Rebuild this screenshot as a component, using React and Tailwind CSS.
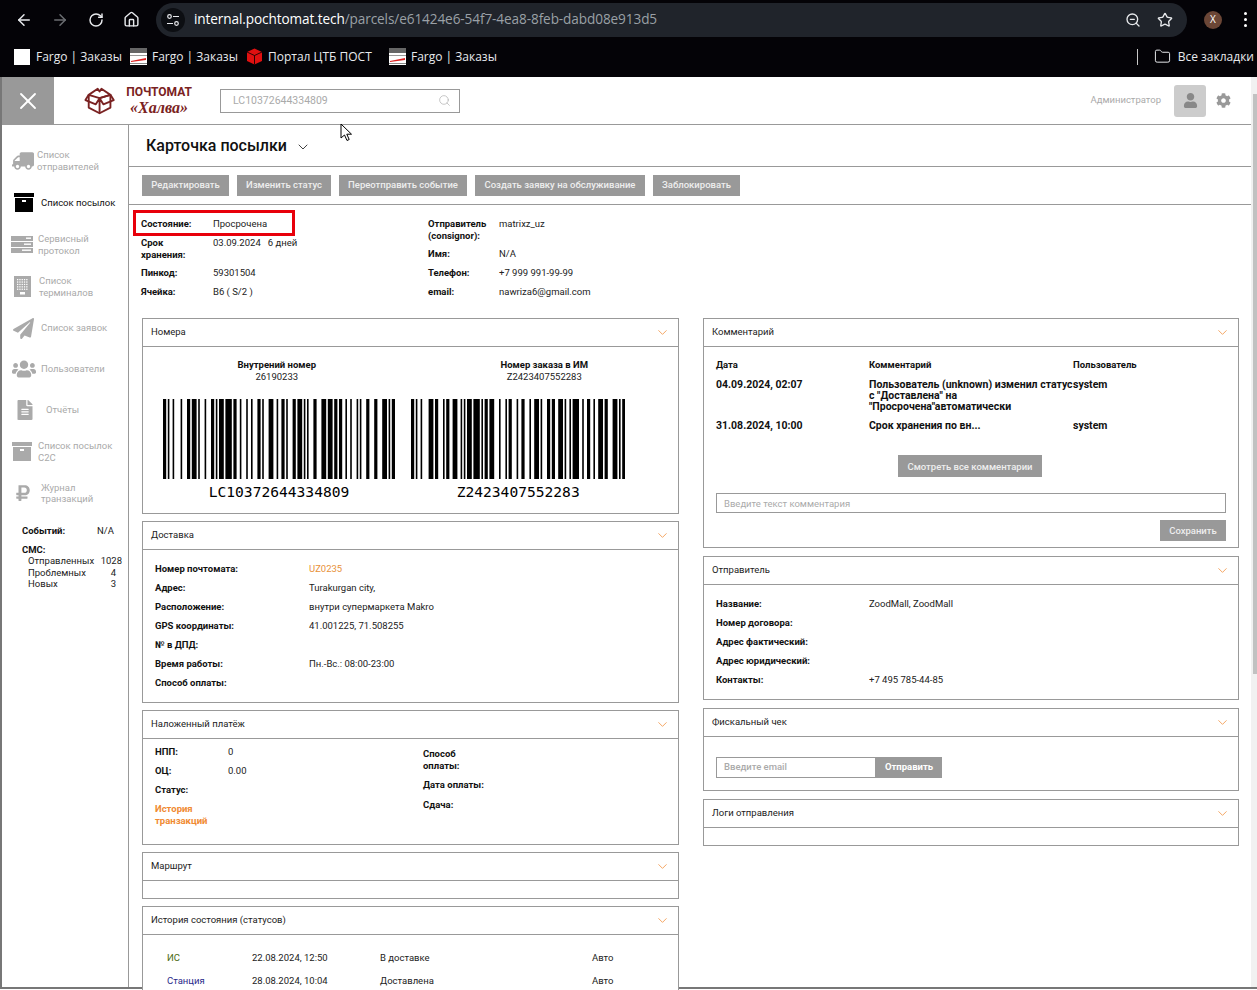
import { ArrowLeft, ArrowRight, RotateCw, Home, ZoomOut, Star, Folder, Search, ChevronDown, X } from 'lucide-react';
import { FaTruck, FaPaperPlane, FaUsers, FaFileAlt, FaRubleSign, FaCog, FaUser } from 'react-icons/fa';

const PATTERNS = ['212222','222122','222221','121223','121322','131222','122213','122312','132212','221213','221312','231212','112232','122132','122231','113222','123122','123221','223211','221132','221231','213212','223112','312131','311222','321122','321221','312212','322112','322211','212123','212321','232121','111323','131123','131321','112313','132113','132311','211313','231113','231311','112133','112331','132131','113123','113321','133121','313121','211331','231131','213113','213311','213131','311123','311321','331121','312113','312311','332111','314111','221411','431111','111224','111422','121124','121421','141122','141221','112214','112412','122114','122411','142112','142211','241211','221114','413111','241112','134111','111242','121142','121241','114212','124112','124211','411212','421112','421211','212141','214121','412121','111143','111341','131141','114113','114311','411113','411311','113141','114131','311141','411131','211412','211214','211232','2331112'];

// code128: text part in set B, then digit pairs in set C
function encode(bPart, cPart) {
  const codes = [104];
  for (const ch of bPart) codes.push(ch.charCodeAt(0) - 32);
  codes.push(99);
  for (let i = 0; i < cPart.length; i += 2) codes.push(Number(cPart.slice(i, i + 2)));
  let sum = codes[0];
  for (let i = 1; i < codes.length; i++) sum += codes[i] * i;
  codes.push(sum % 103);
  codes.push(106);
  return codes.map((c) => PATTERNS[c]).join('');
}

function Barcode({ bPart, cPart, text }) {
  const pattern = encode(bPart, cPart);
  const bars = [];
  let x = 0;
  [...pattern].forEach((w, i) => {
    const n = Number(w);
    if (i % 2 === 0) bars.push(<rect key={i} x={x * 1.6} y="0" width={n * 1.6} height="80" fill="#000" />);
    x += n;
  });
  const width = x * 1.6;
  return (
    <div className="flex flex-col items-center" style={{ width }}>
      <svg width={width} height="80" className="block">{bars}</svg>
      <div className="mt-[4px] [font-family:'DejaVu_Sans_Mono',monospace] text-[14.6px] leading-[18px] text-black">{text}</div>
    </div>
  );
}

function Card({ title, children }) {
  return (
    <div className="border border-[#999] bg-white">
      <div className="flex h-[28px] items-center justify-between border-b border-[#999] pl-[8px] pr-[8px] text-[9.5px] text-[#222]">
        <span>{title}</span>
        <ChevronDown size={15} strokeWidth={1.2} className="text-[#f08a32]" />
      </div>
      {children}
    </div>
  );
}

function Row({ label, value, labelWidth, height = 'h-[19px]', valueClass = '' }) {
  return (
    <div className={`flex items-center ${height}`}>
      <div className="shrink-0 font-bold text-[#111]" style={{ width: labelWidth }}>{label}</div>
      <div className={`text-[#222] ${valueClass}`}>{value}</div>
    </div>
  );
}

function GrayButton({ children, className = '' }) {
  return <button className={`flex h-[21px] items-center justify-center bg-[#999] text-[9.5px] font-medium text-[#eee] ${className}`}>{children}</button>;
}

function BoxIcon({ fill, lidHole }) {
  return (
    <svg width="20" height="19" viewBox="0 0 20 19">
      <rect x="0" y="0" width="20" height="4" fill={fill} />
      <rect x="1" y="5" width="18" height="14" fill={fill} />
      <rect x="8" y="7" width="4" height="2" fill={lidHole} />
    </svg>
  );
}

function ServerIcon() {
  return (
    <svg width="22" height="17" viewBox="0 0 22 17" fill="#aaa">
      <rect x="0" y="0" width="22" height="5" />
      <rect x="0" y="6" width="22" height="5" />
      <rect x="0" y="12" width="22" height="5" />
      <rect x="15" y="1.5" width="5" height="1.4" fill="#fff" />
      <rect x="13" y="7.5" width="7" height="1.4" fill="#fff" />
      <rect x="11" y="13.5" width="9" height="1.4" fill="#fff" />
    </svg>
  );
}

function TerminalIcon() {
  const dots = [];
  for (let r = 0; r < 5; r++) for (let c = 0; c < 5; c++) dots.push(<rect key={`${r}-${c}`} x={3 + c * 2.3} y={3 + r * 2.4} width="1.3" height="1.3" fill="#fff" />);
  return (
    <svg width="17" height="21" viewBox="0 0 17 21">
      <rect width="17" height="21" fill="#aaa" />
      {dots}
      <rect x="6" y="16" width="5" height="2.5" fill="#fff" />
    </svg>
  );
}

const NAV = [
  { icon: <FaTruck size={22} className="-scale-x-100 text-[#aaa]" />, text: ['Список', 'отправителей'], left: 12, gap: 3, h: 'h-[41px]' },
  { icon: <BoxIcon fill="#000" lidHole="#fff" />, text: ['Список посылок'], left: 14, gap: 7, h: 'h-[43px]', dark: true },
  { icon: <ServerIcon />, text: ['Сервисный', 'протокол'], left: 11, gap: 5, h: 'h-[41px]' },
  { icon: <TerminalIcon />, text: ['Список', 'терминалов'], left: 14, gap: 8, h: 'h-[43px]' },
  { icon: <FaPaperPlane size={21} className="text-[#aaa]" />, text: ['Список заявок'], left: 13, gap: 7, h: 'h-[40px]' },
  { icon: <FaUsers size={24} className="text-[#aaa]" />, text: ['Пользователи'], left: 12, gap: 5, h: 'h-[41px]' },
  { icon: <FaFileAlt size={20} className="text-[#aaa]" />, text: ['Отчёты'], left: 15, gap: 11, h: 'h-[42px]' },
  { icon: <BoxIcon fill="#aaa" lidHole="#fff" />, text: ['Список посылок', 'C2C'], left: 12, gap: 6, h: 'h-[41px]' },
  { icon: <FaRubleSign size={18} className="text-[#aaa]" />, text: ['Журнал', 'транзакций'], left: 14, gap: 9, h: 'h-[42px]' },
];

function Sidebar() {
  return (
    <aside className="w-[127px] shrink-0 border-r border-[#999] pt-[15px] text-[9.5px] leading-[11.5px]">
      {NAV.map((item) => (
        <div key={item.text[0] + item.text[1]} className={`flex items-center ${item.h}`} style={{ paddingLeft: item.left - 2 }}>
          <div className="shrink-0">{item.icon}</div>
          <div className={item.dark ? 'text-[#111]' : 'text-[#aaa]'} style={{ marginLeft: item.gap }}>
            {item.text.map((t) => <div key={t}>{t}</div>)}
          </div>
        </div>
      ))}
      <div className="mt-[11px] pl-[20px] pr-[6px] text-[#222]">
        <div className="flex justify-between pr-[8px]">
          <b className="text-[#111]">Событий:</b>
          <span>N/A</span>
        </div>
        <div className="mt-[7px] font-bold text-[#111]">СМС:</div>
        <div className="pl-[6px]">
          <div className="flex justify-between"><span>Отправленных</span><span>1028</span></div>
          <div className="flex justify-between pr-[6px]"><span>Проблемных</span><span>4</span></div>
          <div className="flex justify-between pr-[6px]"><span>Новых</span><span>3</span></div>
        </div>
      </div>
    </aside>
  );
}

function BrowserBar() {
  return (
    <div className="h-[77px] shrink-0 bg-[#040307] text-white [font-family:'Open_Sans',sans-serif]">
      <div className="flex h-[38px] items-center pl-[15px] pr-[5px] pt-[1px]">
        <ArrowLeft size={18} className="text-[#e8eaed]" />
        <ArrowRight size={18} className="ml-[18px] text-[#6b6e72]" />
        <RotateCw size={16} className="ml-[19px] text-[#e8eaed]" strokeWidth={2.2} />
        <Home size={17} className="ml-[19px] text-[#e8eaed]" />
        <div className="ml-[16px] flex h-[34px] w-[1031px] items-center rounded-full bg-[#20242b] pl-[5px] pr-[14px]">
          <div className="flex h-[24px] w-[24px] items-center justify-center rounded-full bg-[#0c0e12]">
            <svg width="14" height="14" viewBox="0 0 14 14" fill="none" stroke="#e8eaed" strokeWidth="1.2">
              <circle cx="3.5" cy="3.5" r="1.8" /><path d="M7 3.5h6M1 10.5h6" /><circle cx="10.5" cy="10.5" r="1.8" />
            </svg>
          </div>
          <span className="ml-[9px] text-[13.6px] tracking-[-0.1px]">internal.pochtomat.tech<span className="text-[#9aa0a6]">/parcels/e61424e6-54f7-4ea8-8feb-dabd08e913d5</span></span>
          <ZoomOut size={16} className="ml-auto text-[#e8eaed]" />
          <Star size={16} className="ml-[16px] text-[#e8eaed]" />
        </div>
        <div className="ml-[17px] flex h-[18px] w-[18px] items-center justify-center rounded-full bg-[#6b4636] text-[10px]">X</div>
        <div className="ml-[auto] flex flex-col gap-[3px] pr-[5px]">
          <span className="h-[3px] w-[3px] rounded-full bg-white" />
          <span className="h-[3px] w-[3px] rounded-full bg-white" />
          <span className="h-[3px] w-[3px] rounded-full bg-white" />
        </div>
      </div>
      <div className="flex h-[37px] items-center pl-[14px] text-[12px] text-[#e8eaed]">
        <span className="h-[16px] w-[16px] bg-white" />
        <span className="ml-[6px] w-[94px]">Fargo | Заказы</span>
        <FargoIcon />
        <span className="ml-[5px] w-[94px]">Fargo | Заказы</span>
        <svg width="17" height="17" viewBox="0 0 17 17"><path d="M8.5 0.5 16 4v9l-7.5 3.5L1 13V4z" fill="#e01010" /><path d="M1 4l7.5 3.5L16 4M8.5 7.5v9" stroke="#000" strokeWidth="0.8" fill="none" /></svg>
        <span className="ml-[5px] w-[121px]">Портал ЦТБ ПОСТ</span>
        <FargoIcon />
        <span className="ml-[5px]">Fargo | Заказы</span>
        <span className="ml-auto h-[16px] w-[1px] bg-[#c8c8c8]" />
        <Folder size={17} strokeWidth={1.4} className="ml-[16px]" />
        <span className="ml-[7px] pr-[3px]">Все закладки</span>
      </div>
    </div>
  );
}

function FargoIcon() {
  return (
    <svg width="17" height="17" viewBox="0 0 17 17">
      <rect width="17" height="17" fill="#fff" />
      <rect y="0" width="17" height="5" fill="#666" />
      <rect y="7" width="17" height="1" fill="#999" />
      <path d="M1 13l15-3v2L1 14z" fill="#d22" />
      <rect y="15" width="17" height="1" fill="#888" />
    </svg>
  );
}

function Logo() {
  return (
    <div className="ml-[30px] flex w-[108px] items-center text-[#7a2222]">
      <svg width="33" height="30" viewBox="0 0 33 30" fill="none" stroke="#7a2222" strokeWidth="2" strokeLinejoin="round">
        <path d="M16.5 12 5 8.5V22l11.5 6 11.5-6V8.5z" />
        <path d="M16.5 12v16M5 8.5 1.5 14l11 4.5 4-6.5 4 6.5 11-4.5L28 8.5M5 8.5 14.5 2l2 3 2-3L28 8.5l-11.5 3.5" />
      </svg>
      <div className="ml-[11px] flex flex-col items-center">
        <span className="text-[12px] font-bold leading-[14px] [font-family:'Liberation_Sans_Narrow','Roboto',sans-serif]">ПОЧТОМАТ</span>
        <span className="whitespace-nowrap text-[16px] font-bold italic leading-[18px] [font-family:'Liberation_Serif',serif]">«Халва»</span>
      </div>
    </div>
  );
}

function TopBar() {
  return (
    <header className="flex h-[48px] shrink-0 items-center border-b border-[#999]">
      <div className="flex h-[47px] w-[52px] items-center justify-center bg-[#999]">
        <X size={28} strokeWidth={1.6} className="text-white" />
      </div>
      <Logo />
      <div className="ml-[28px] flex h-[24px] w-[240px] items-center border border-[#999] pl-[12px] pr-[8px] text-[10.5px] text-[#aaa]">
        LC10372644334809
        <Search size={13} strokeWidth={1.2} className="ml-auto" />
      </div>
      <span className="ml-auto text-[9.5px] text-[#aaa]">Администратор</span>
      <div className="ml-[13px] flex h-[32px] w-[32px] items-center justify-center rounded-[3px] bg-[#ccc]">
        <FaUser size={15} className="text-[#888]" />
      </div>
      <FaCog size={15} className="ml-[10px] mr-[20px] text-[#999]" />
    </header>
  );
}

function InfoBlock() {
  return (
    <div className="relative flex h-[100px] pl-[12px] pt-[13px] text-[9.5px] leading-[11.5px]">
      <div className="absolute left-[4px] top-[5px] h-[26px] w-[162px] border-[3px] border-[#e8000b]" />
      <div className="w-[287px]">
        <Row label="Состояние:" value="Просрочена" labelWidth={72} height="h-[12px]" />
        <div className="mt-[7px] flex">
          <div className="w-[72px] font-bold text-[#111]">Срок<br />хранения:</div>
          <div className="text-[#222]">03.09.2024 &nbsp; 6 дней</div>
        </div>
        <div className="mt-[7px]"><Row label="Пинкод:" value="59301504" labelWidth={72} height="h-[12px]" /></div>
        <div className="mt-[7px]"><Row label="Ячейка:" value="B6 ( S/2 )" labelWidth={72} height="h-[12px]" /></div>
      </div>
      <div>
        <div className="flex">
          <div className="w-[71px] font-bold text-[#111]">Отправитель<br />(consignor):</div>
          <div className="text-[#222]">matrixz_uz</div>
        </div>
        <div className="mt-[7px]"><Row label="Имя:" value="N/A" labelWidth={71} height="h-[12px]" /></div>
        <div className="mt-[7px]"><Row label="Телефон:" value="+7 999 991-99-99" labelWidth={71} height="h-[12px]" /></div>
        <div className="mt-[7px]"><Row label="email:" value="nawriza6@gmail.com" labelWidth={71} height="h-[12px]" /></div>
      </div>
    </div>
  );
}

function LeftColumn() {
  return (
    <div className="flex flex-col gap-[7px]">
      <Card title="Номера">
        <div className="h-[166px] pt-[12px] text-[9.5px] leading-[12px]">
          <div className="grid grid-cols-2 text-center">
            <div><div className="font-bold text-[#111]">Внутрений номер</div><div className="text-[#222]">26190233</div></div>
            <div><div className="font-bold text-[#111]">Номер заказа в ИМ</div><div className="text-[#222]">Z2423407552283</div></div>
          </div>
          <div className="mt-[16px] flex gap-[16px] pl-[20px]">
            <Barcode bPart="LC" cPart="10372644334809" text="LC10372644334809" />
            <Barcode bPart="Z2" cPart="423407552283" text="Z2423407552283" />
          </div>
        </div>
      </Card>
      <Card title="Доставка">
        <div className="h-[152px] pl-[12px] pt-[9px] text-[9.5px] leading-[11.5px]">
          <Row label="Номер почтомата:" value="UZ0235" labelWidth={154} valueClass="!text-[#e8913a]" />
          <Row label="Адрес:" value="Turakurgan city," labelWidth={154} />
          <Row label="Расположение:" value="внутри супермаркета Makro" labelWidth={154} />
          <Row label="GPS координаты:" value="41.001225, 71.508255" labelWidth={154} />
          <Row label="№ в ДПД:" value="" labelWidth={154} />
          <Row label="Время работы:" value="Пн.-Вс.: 08:00-23:00" labelWidth={154} />
          <Row label="Способ оплаты:" value="" labelWidth={154} />
        </div>
      </Card>
      <Card title="Наложенный платёж">
        <div className="flex h-[105px] pl-[12px] pt-[3px] text-[9.5px] leading-[11.5px]">
          <div className="w-[268px]">
            <Row label="НПП:" value="0" labelWidth={73} />
            <Row label="ОЦ:" value="0.00" labelWidth={73} />
            <Row label="Статус:" value="" labelWidth={73} />
            <div className="mt-[4px] font-bold text-[#f08a32]">История<br />транзакций</div>
          </div>
          <div className="pt-[6px] font-bold text-[#111]">
            <div>Способ<br />оплаты:</div>
            <div className="mt-[8px]">Дата оплаты:</div>
            <div className="mt-[8px]">Сдача:</div>
          </div>
        </div>
      </Card>
      <Card title="Маршрут">
        <div className="h-[17px]" />
      </Card>
      <Card title="История состояния (статусов)">
        <div className="pl-[24px] pt-[11px] text-[9.5px] leading-[23px] text-[#222]">
          <div className="flex"><span className="w-[85px] text-[#4a6a10]">ИС</span><span className="w-[128px]">22.08.2024, 12:50</span><span className="w-[212px]">В доставке</span><span>Авто</span></div>
          <div className="flex"><span className="w-[85px] text-[#2a2a8a]">Станция</span><span className="w-[128px]">28.08.2024, 10:04</span><span className="w-[212px]">Доставлена</span><span>Авто</span></div>
        </div>
      </Card>
    </div>
  );
}

function RightColumn() {
  return (
    <div className="flex flex-col gap-[8px]">
      <Card title="Комментарий">
        <div className="h-[200px] pl-[12px] pr-[12px] pt-[12px] font-bold leading-[11px] text-[#111]">
          <div className="flex text-[9.5px]">
            <span className="w-[153px]">Дата</span><span className="w-[204px]">Комментарий</span><span>Пользователь</span>
          </div>
          <div className="mt-[9px] flex text-[10.5px]">
            <span className="w-[153px]">04.09.2024, 02:07</span>
            <span className="w-[204px]">Пользователь (unknown) изменил статус с "Доставлена" на "Просрочена"автоматически</span>
            <span>system</span>
          </div>
          <div className="mt-[8px] flex text-[10.5px]">
            <span className="w-[153px]">31.08.2024, 10:00</span>
            <span className="w-[204px]">Срок хранения по вн...</span>
            <span>system</span>
          </div>
          <div className="mt-[24px] flex justify-center pr-[2px]">
            <GrayButton className="h-[22px] w-[144px]">Смотреть все комментарии</GrayButton>
          </div>
          <div className="mt-[16px] flex h-[20px] items-center border border-[#999] pl-[7px] text-[9.5px] font-normal text-[#aaa]">Введите текст комментария</div>
          <div className="mt-[7px] flex justify-end">
            <GrayButton className="w-[66px]">Сохранить</GrayButton>
          </div>
        </div>
      </Card>
      <Card title="Отправитель">
        <div className="h-[114px] pl-[12px] pt-[9px] text-[9.5px] leading-[11.5px]">
          <Row label="Название:" value="ZoodMall, ZoodMall" labelWidth={153} />
          <Row label="Номер договора:" value="" labelWidth={153} />
          <Row label="Адрес фактический:" value="" labelWidth={153} />
          <Row label="Адрес юридический:" value="" labelWidth={153} />
          <Row label="Контакты:" value="+7 495 785-44-85" labelWidth={153} />
        </div>
      </Card>
      <Card title="Фискальный чек">
        <div className="flex h-[53px] items-start pl-[12px] pt-[20px] text-[9.5px]">
          <div className="flex h-[21px] w-[160px] items-center border border-[#999] pl-[7px] font-medium text-[#aaa]">Введите email</div>
          <GrayButton className="w-[66px] !font-bold !text-white">Отправить</GrayButton>
        </div>
      </Card>
      <Card title="Логи отправления">
        <div className="h-[17px]" />
      </Card>
    </div>
  );
}

function Scrollbar() {
  return (
    <div className="w-[6px] shrink-0 bg-[#f1f1f1] pl-[2px] pt-[17px]">
      <div className="h-[580px] bg-[#c1c1c1]" />
    </div>
  );
}

export default function App() {
  return (
    <div className="relative flex h-[990px] w-[1257px] flex-col overflow-hidden bg-white [font-family:Roboto,sans-serif]">
      <BrowserBar />
      <div className="flex h-[912px] border-b-2 border-l-2 border-[#777]">
        <div className="flex min-w-0 flex-1 flex-col">
          <TopBar />
          <div className="flex min-h-0 flex-1">
            <Sidebar />
            <main className="min-w-0 flex-1 pr-[12px]">
              <div className="-mr-[12px] flex h-[42px] items-center border-b border-[#999] pl-[17px] text-[16px] font-medium text-[#111]">
                Карточка посылки
                <ChevronDown size={16} strokeWidth={1.2} className="ml-[8px] mt-[2px]" />
              </div>
              <div className="-mr-[12px] flex h-[38px] gap-[8px] border-b border-[#999] pl-[13px] pt-[8px]">
                <GrayButton className="w-[87px]">Редактировать</GrayButton>
                <GrayButton className="w-[94px]">Изменить статус</GrayButton>
                <GrayButton className="w-[128px]">Переотправить событие</GrayButton>
                <GrayButton className="w-[170px]">Создать заявку на обслуживание</GrayButton>
                <GrayButton className="w-[87px]">Заблокировать</GrayButton>
              </div>
              <InfoBlock />
              <div className="mt-[13px] grid grid-cols-[537px_536px] gap-x-[24px] pl-[13px]">
                <LeftColumn />
                <RightColumn />
              </div>
            </main>
          </div>
        </div>
        <Scrollbar />
      </div>
      <svg width="14" height="19" viewBox="0 0 14 19" className="absolute left-[340px] top-[123px]">
        <path d="M1 1v14l3.5-3 2.5 5.5 2.2-1-2.4-5.3H11.5z" fill="#fff" stroke="#000" strokeWidth="1" />
      </svg>
    </div>
  );
}
